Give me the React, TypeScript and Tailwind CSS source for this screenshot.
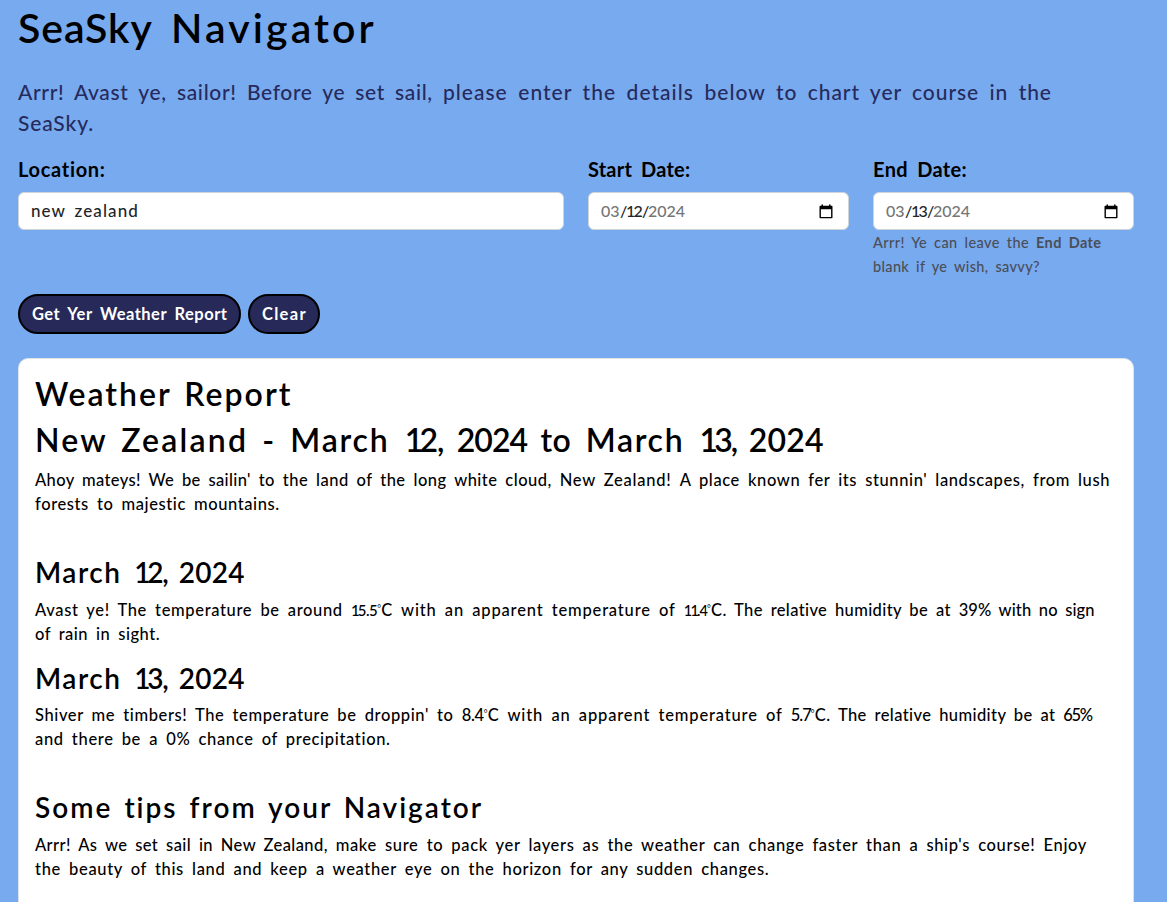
import type { ReactNode } from "react";

function T({ c, children }: { c: string; children: ReactNode }) {
  return <span className={c}>{children}</span>;
}

function One() {
  return <span className="tracking-[-0.12em]">1</span>;
}

function Degree() {
  return (
    <span className="relative -top-[4px] inline-block w-[4px] text-[9px] leading-none tracking-normal font-normal">°</span>
  );
}

function CalendarIcon() {
  return (
    <svg width="14" height="15" viewBox="0 0 14 15" className="shrink-0">
      <path
        fill="#000"
        fillRule="evenodd"
        d="M2.5 0.5h1.5v1.2h6V0.5h1.5v1.2h1c.6 0 1 .4 1 1v10.6c0 .6-.4 1-1 1h-11c-.6 0-1-.4-1-1V2.700c0-.6.4-1 1-1h1zM1.900 5.200v7.700h10.200V5.200z"
      />
    </svg>
  );
}

function DateField({ digit }: { digit: string }) {
  return (
    <div className="flex h-[38px] items-center justify-between rounded-md border border-[#ced4da] bg-white pl-3 pr-[15px] text-[16px] text-[#212529]">
      <div className="flex">
        <span className="w-[19px] tracking-[-0.1px] text-[#757575]">03</span>
        <span className="w-[6px]">/</span>
        <span className="w-[16px] tracking-[-0.5px]">
          <One />
          {digit}
        </span>
        <span className="w-[6px]">/</span>
        <span className="text-[#757575]">2024</span>
      </div>
      <CalendarIcon />
    </div>
  );
}

function DateHeading({ digit }: { digit: string }) {
  return (
    <h3 className="h-[34px] text-[28px] font-semibold leading-[34px]">
      <T c="tracking-[1.5px] [word-spacing:0.16em]!">March </T>
      <One />
      <T c="tracking-[-1.3px]">{digit}, </T>
      <T c="tracking-[0.26px]">2024</T>
    </h3>
  );
}

export default function App() {
  return (
    <main className="h-[902px] overflow-hidden whitespace-pre bg-[#78aaf0] pl-[18px] pr-[33px] font-['Lato','Liberation_Sans',sans-serif] text-[16.5px] font-medium leading-6 text-black **:[word-spacing:0.2em]">
      <h1 className="pt-1 text-[41px] font-semibold leading-[48px]">
        <T c="tracking-[0.93px]">SeaSky </T>
        <T c="tracking-[3.1px]">Navigator</T>
      </h1>

      <div className="mt-[24px] text-[21px] leading-[31px] text-[#262a5c]">
        <p>
          <T c="tracking-[0.67px]">Arrr! Avast ye, sailor! </T>
          <T c="tracking-[0.63px]">Before ye set sail, </T>
          <T c="tracking-[1.02px]">please enter the details below </T>
          <T c="tracking-[0.93px]">to chart yer course in the</T>
        </p>
        <p className="tracking-[0.86px]">SeaSky.</p>
      </div>

      <form className="mt-[15px]">
        <div className="grid grid-cols-[546px_261px_261px] gap-x-6">
          <div>
            <div className="mb-[6px] h-[33px] text-[20px] font-bold leading-[33px] tracking-[0.69px]">Location:</div>
            <div className="flex h-[38px] items-center rounded-md border border-[#ced4da] bg-white px-3 text-[17px] tracking-[1.1px] text-[#212529]">
              new zealand
            </div>
          </div>
          <div>
            <div className="mb-[6px] h-[33px] text-[20px] font-bold leading-[33px] tracking-[0.2px]">Start Date:</div>
            <DateField digit="2" />
          </div>
          <div>
            <div className="mb-[6px] h-[33px] text-[20px] font-bold leading-[33px] tracking-[0.35px]">End Date:</div>
            <DateField digit="3" />
            <div className="mt-px text-[14.5px] leading-6 text-[#4a4e57]">
              <p>
                <T c="tracking-[0.4px]">Arrr! Ye can leave the </T>
                <T c="font-bold tracking-[0.42px]">End Date</T>
              </p>
              <p className="tracking-[0.35px]">blank if ye wish, savvy?</p>
            </div>
          </div>
        </div>

        <div className="mt-[15px] flex gap-[7px]">
          <button
            type="button"
            className="h-10 w-[223px] rounded-full border-2 border-black bg-[#272a58] pl-3 text-left font-bold tracking-[0.48px] text-white"
          >
            Get Yer Weather Report
          </button>
          <button
            type="button"
            className="h-10 w-[72px] rounded-full border-2 border-black bg-[#272a58] pl-3 text-left font-bold tracking-[1.3px] text-white"
          >
            Clear
          </button>
        </div>
      </form>

      <section className="mt-6 h-[600px] rounded-[10px] border border-[#dee2e6] bg-white px-4 pt-[14px]">
        <h2 className="mt-[2px] h-[38px] text-[32px] font-semibold leading-[38px] tracking-[2px] [word-spacing:0.1em]!">
          Weather Report
        </h2>
        <h2 className="mt-2 h-[38px] text-[32px] font-semibold leading-[38px]">
          <T c="tracking-[2.2px] [word-spacing:0.12em]!">New Zealand - </T>
          <T c="tracking-[1.8px] [word-spacing:0.17em]!">March </T>
          <One />
          <T c="tracking-[-1px]">2, </T>
          <T c="tracking-[-0.95px]">2024 </T>
          <T c="tracking-[0.27px]">to </T>
          <T c="tracking-[1.7px] [word-spacing:0.17em]!">March </T>
          <One />
          <T c="tracking-[-1.9px]">3, </T>
          <T c="tracking-[0.19px]">2024</T>
        </h2>
        <div className="mt-[9px]">
          <p>
            <T c="tracking-[0.36px]">Ahoy mateys! We be sailin' </T>
            <T c="tracking-[0.47px]">to the land of the long white cloud, </T>
            <T c="tracking-[0.74px]">New Zealand! </T>
            <T c="tracking-[0.6px]">A place known fer its stunnin' landscapes, from lush</T>
          </p>
          <p className="tracking-[0.59px]">forests to majestic mountains.</p>
        </div>

        <div className="mt-[39px]">
          <DateHeading digit="2" />
          <div className="mt-[9px]">
            <p className="h-6">
              <T c="tracking-[0.65px]">Avast ye! The temperature be around </T>
              <T c="text-[15px]">
                <One />
                <T c="tracking-[-0.5px]">5.5</T>
              </T>
              <Degree />
              <T c="tracking-[0.82px]">C with an apparent temperature of </T>
              <T c="text-[14.5px]">
                <One />
                <One />
                <T c="tracking-[-0.9px]">.4</T>
              </T>
              <Degree />
              <T c="tracking-[0.37px]">C. The relative humidity be at </T>
              <T c="tracking-[0.1px]">39% with no sign</T>
            </p>
            <p className="tracking-[0.5px]">of rain in sight.</p>
          </div>
        </div>

        <div className="mt-[15px]">
          <DateHeading digit="3" />
          <div className="mt-[8px]">
            <p className="h-6">
              <T c="tracking-[0.61px]">Shiver me timbers! The temperature be droppin' to </T>
              <T c="tracking-[-0.33px]">8.4</T>
              <Degree />
              <T c="tracking-[0.84px]">C with an apparent temperature of </T>
              <T c="tracking-[-1px]">5.7</T>
              <Degree />
              <T c="tracking-[0.4px]">C. The relative humidity be at </T>
              <T c="tracking-[-1.3px]">65%</T>
            </p>
            <p className="tracking-[0.66px]">and there be a 0% chance of precipitation.</p>
          </div>
        </div>

        <div className="mt-[39px]">
          <h3 className="h-[34px] text-[28px] font-semibold leading-[34px] tracking-[2px] [word-spacing:0.11em]!">
            Some tips from your Navigator
          </h3>
          <div className="mt-[9px]">
            <p>
              <T c="tracking-[0.4px]">Arrr! As we set sail in New Zealand, </T>
              <T c="tracking-[0.65px]">
                make sure to pack yer layers as the weather can change faster than a ship's course! Enjoy
              </T>
            </p>
            <p className="tracking-[0.66px]">
              the beauty of this land and keep a weather eye on the horizon for any sudden changes.
            </p>
          </div>
        </div>
      </section>
    </main>
  );
}
